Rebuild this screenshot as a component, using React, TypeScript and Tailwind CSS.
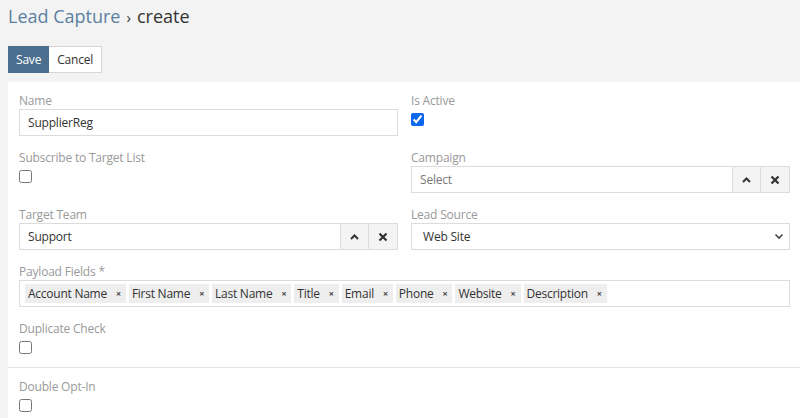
import React from 'react';

const font = { fontFamily: '"Open Sans", "Liberation Sans", sans-serif' };

function Label({ children }: { children: React.ReactNode }) {
  return <div className="text-[12px] tracking-[-0.2px] leading-[17px] text-[#999]">{children}</div>;
}

function Check({ checked = false }: { checked?: boolean }) {
  return (
    <div className="pt-[4px] h-[20px]">
      <input type="checkbox" defaultChecked={checked} className="w-[13px] h-[13px] m-0 block accent-[#0b67f0]" />
    </div>
  );
}

function TextInput({ value, placeholder }: { value?: string; placeholder?: string }) {
  return (
    <div className="h-[27px] border border-[#dcdcdc] bg-white flex items-center px-[8px] text-[12px] tracking-[-0.2px] text-[#333]">
      {value ? value : <span className="text-[#777]">{placeholder}</span>}
    </div>
  );
}

function LinkInput({ value, placeholder }: { value?: string; placeholder?: string }) {
  return (
    <div className="h-[27px] flex">
      <div className="flex-1 border border-[#dcdcdc] bg-white flex items-center px-[8px] text-[12px] tracking-[-0.2px] text-[#333]">
        {value ? value : <span className="text-[#777]">{placeholder}</span>}
      </div>
      <button className="w-[28px] border border-l-0 border-[#dcdcdc] bg-[#f4f4f4] flex items-center justify-center">
        <svg width="9" height="6" viewBox="0 0 9 6"><path d="M1 5 L4.5 1.5 L8 5" fill="none" stroke="#333" strokeWidth="2" /></svg>
      </button>
      <button className="w-[29px] border border-l-0 border-[#dcdcdc] bg-[#f4f4f4] flex items-center justify-center">
        <svg width="10" height="10" viewBox="0 0 10 10"><path d="M1.5 1.5 L8.5 8.5 M8.5 1.5 L1.5 8.5" fill="none" stroke="#333" strokeWidth="2.2" /></svg>
      </button>
    </div>
  );
}

const chips = ['Account Name', 'First Name', 'Last Name', 'Title', 'Email', 'Phone', 'Website', 'Description'];

export default function App() {
  return (
    <div className="min-h-[418px] bg-[#f3f3f3] overflow-hidden" style={font}>
      <div className="pl-[8px] pt-[3px] h-[46px] text-[18px] leading-[26px]">
        <span className="text-[#5a7fa0]">Lead Capture</span>
        <span className="text-[#333] mx-[6px] text-[15px]">›</span>
        <span className="text-[#333]">create</span>
      </div>
      <div className="pl-[8px] flex h-[36px]">
        <button className="h-[27px] px-[7px] bg-[#4b6f8f] text-white text-[12px] tracking-[-0.2px] border border-[#4b6f8f]">Save</button>
        <button className="h-[27px] px-[8px] bg-white text-[#333] text-[12px] tracking-[-0.2px] border border-l-0 border-[#d6d6d6]">Cancel</button>
      </div>
      <div className="ml-[8px] bg-white">
        <div className="pl-[11px] pr-[10px] pt-[10px] border-b border-[#e3e3e3]">
          <div className="grid grid-cols-2 gap-x-[13px]">
            <div className="h-[57px]">
              <Label>Name</Label>
              <TextInput value="SupplierReg" />
            </div>
            <div className="h-[57px]">
              <Label>Is Active</Label>
              <Check checked />
            </div>
            <div className="h-[57px]">
              <Label>Subscribe to Target List</Label>
              <Check />
            </div>
            <div className="h-[57px]">
              <Label>Campaign</Label>
              <LinkInput placeholder="Select" />
            </div>
            <div className="h-[57px]">
              <Label>Target Team</Label>
              <LinkInput value="Support" />
            </div>
            <div className="h-[57px]">
              <Label>Lead Source</Label>
              <div className="h-[27px] border border-[#dcdcdc] bg-white flex items-center justify-between pl-[11px] pr-[5px] text-[12px] tracking-[-0.2px] text-[#333]">
                <span>Web Site</span>
                <svg width="10" height="7" viewBox="0 0 10 7"><path d="M1.5 1.5 L5 5 L8.5 1.5" fill="none" stroke="#444" strokeWidth="1.6" /></svg>
              </div>
            </div>
          </div>
          <div className="h-[57px]">
            <Label>Payload Fields *</Label>
            <div className="h-[27px] border border-[#dcdcdc] bg-white flex items-center px-[5px] gap-[3px]">
              {chips.map((c) => (
                <span key={c} className="h-[19px] bg-[#eeeeee] flex items-center pl-[3px] pr-[5px] text-[12px] tracking-[-0.25px] text-[#333] leading-[19px]">
                  {c}
                  <span className="ml-[9px] text-[9px] font-bold text-[#444]">×</span>
                </span>
              ))}
            </div>
          </div>
          <div className="h-[47px]">
            <Label>Duplicate Check</Label>
            <Check />
          </div>
        </div>
        <div className="pl-[11px] pr-[10px] pt-[10px] h-[60px]">
          <Label>Double Opt-In</Label>
          <Check />
        </div>
      </div>
    </div>
  );
}
